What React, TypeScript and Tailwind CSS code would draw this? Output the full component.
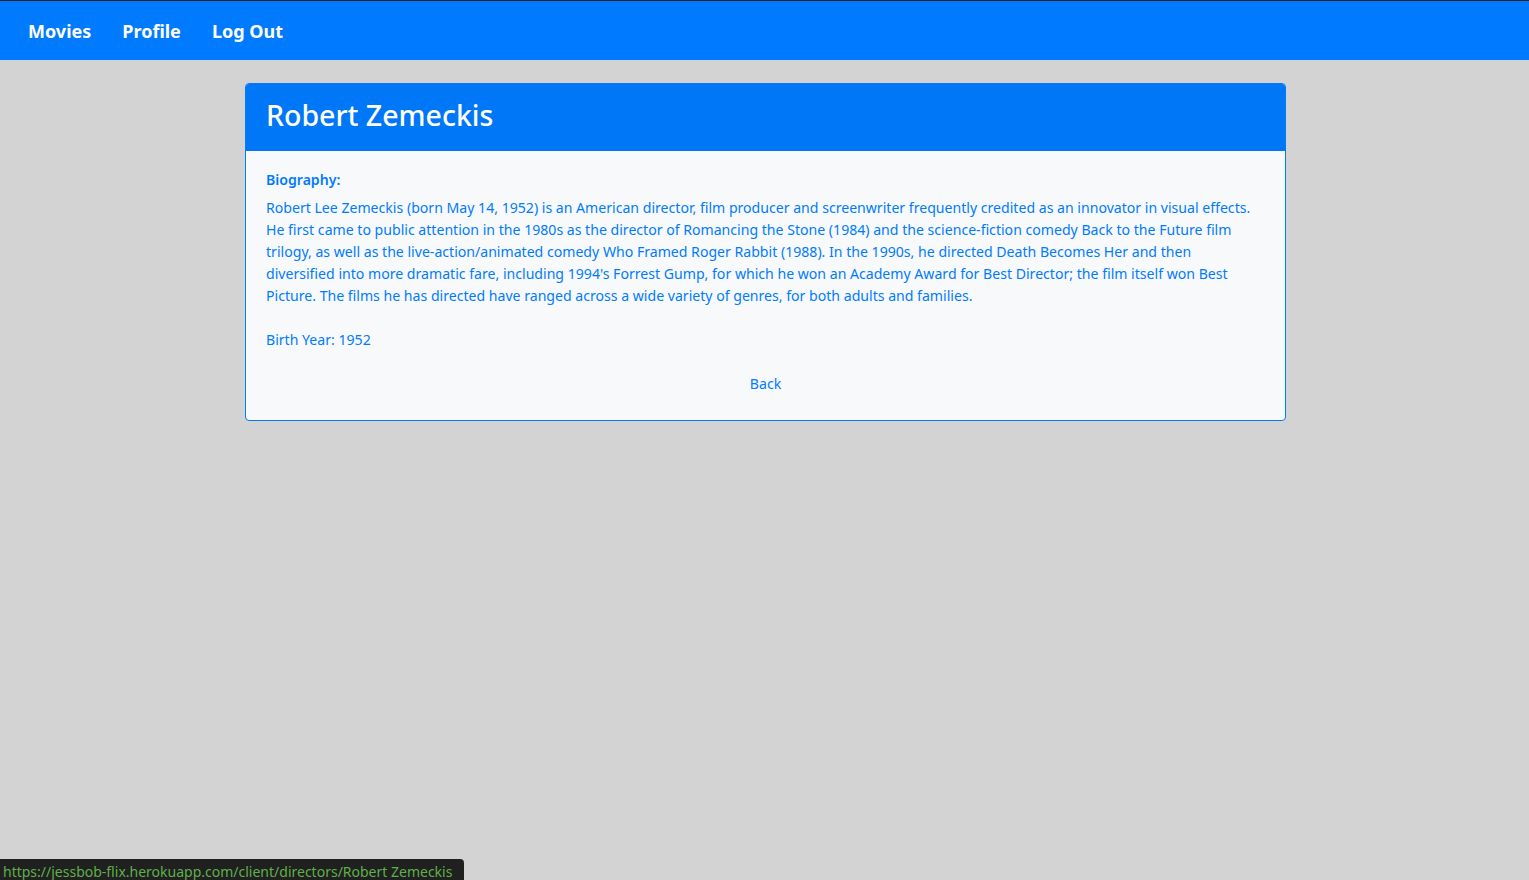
export default function App() {
	return (
		<div className="relative flex min-h-[880px] flex-col bg-[#d3d3d3] font-['Noto_Sans',sans-serif]">
			<div className="h-px bg-[#222]" />
			<nav className="flex h-[59px] items-center gap-[31px] bg-[#007bff] px-[28px] pt-[2px]">
				<a className="text-[18px] font-bold text-white">Movies</a>
				<a className="text-[18px] font-bold text-white">Profile</a>
				<a className="text-[18px] font-bold text-white">Log Out</a>
			</nav>

			<div className="mt-[23px] ml-[245px] w-[1041px] overflow-hidden rounded-[4px] border border-[#007bff] bg-[#f8f9fa]">
				<div className="flex h-[67px] items-center bg-[#0077f7] px-[20px] pb-[4px]">
					<h1 className="text-[28.5px] font-medium text-white">Robert Zemeckis</h1>
				</div>
				<div className="flex flex-col px-[20px] pt-[18px] pb-[25px] text-[14.1px] leading-[22px] text-[#007bff]">
					<span className="font-semibold">Biography:</span>
					<p className="mt-[6px] max-w-[988px]">
						Robert Lee Zemeckis (born May 14, 1952) is an American director, film producer and screenwriter frequently credited as an innovator in visual effects. He first came to public attention in the 1980s as the director of Romancing the Stone (1984) and the science-fiction comedy Back to the Future film trilogy, as well as the live-action/animated comedy Who Framed Roger Rabbit (1988). In the 1990s, he directed Death Becomes Her and then diversified into more dramatic fare, including 1994's Forrest Gump, for which he won an Academy Award for Best Director; the film itself won Best Picture. The films he has directed have ranged across a wide variety of genres, for both adults and families.
					</p>
					<p className="mt-[22px]">Birth Year: 1952</p>
					<button type="button" className="mt-[22px] self-center text-[#007bff]">
						Back
					</button>
				</div>
			</div>

			<div className="absolute bottom-0 left-0 h-[21px] w-[464px] rounded-tr-[4px] bg-[#202020] pt-[2px] pl-[3px] text-[14px] leading-[22px] text-[#5fb04a]">
				https://jessbob-flix.herokuapp.com/client/directors/Robert Zemeckis
			</div>
		</div>
	)
}
